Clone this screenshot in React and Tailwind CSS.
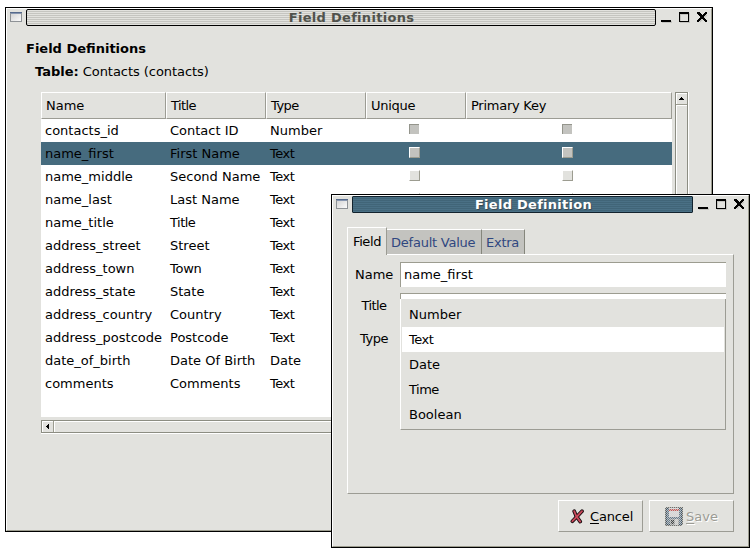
import React from "react";

const COLUMNS = [
  { label: "Name", width: "w-[125px]" },
  { label: "Title", width: "w-[100px] tracking-[-0.6px]" },
  { label: "Type", width: "w-[100px] tracking-[-0.5px]" },
  { label: "Unique", width: "w-[100px] tracking-[-0.25px]" },
  { label: "Primary Key", width: "w-[206px] tracking-[-0.25px]" },
];

const ROWS = [
  ["contacts_id", "Contact ID", "Number"],
  ["name_first", "First Name", "Text"],
  ["name_middle", "Second Name", "Text"],
  ["name_last", "Last Name", "Text"],
  ["name_title", "Title", "Text"],
  ["address_street", "Street", "Text"],
  ["address_town", "Town", "Text"],
  ["address_state", "State", "Text"],
  ["address_country", "Country", "Text"],
  ["address_postcode", "Postcode", "Text"],
  ["date_of_birth", "Date Of Birth", "Date"],
  ["comments", "Comments", "Text"],
];

const TYPES = ["Number", "Text", "Date", "Time", "Boolean"];

// Words that start with a capital T are set tighter than the rest.
const tight = (word) => (/^(Ti|Te|Ty)/.test(word) ? "tracking-[-0.5px]" : word === "Town" ? "tracking-[-0.25px]" : "");

function MenuIcon() {
  return (
    <svg width="13" height="11" viewBox="0 0 13 11" shapeRendering="crispEdges" className="block">
      <defs>
        <linearGradient id="menuFace" x1="0" y1="0" x2="1" y2="1">
          <stop offset="0" stopColor="#d2d2d2" />
          <stop offset="1" stopColor="#fbfbfb" />
        </linearGradient>
      </defs>
      <rect x="0" y="0" width="12" height="10" fill="#8e9296" />
      <rect x="1" y="1" width="10" height="8" fill="url(#menuFace)" />
      <rect x="0" y="0" width="12" height="1" fill="#566a8c" />
      <rect x="1" y="1" width="10" height="1" fill="#8796b0" />
    </svg>
  );
}

function WindowButtons() {
  return (
    <svg width="48" height="12" viewBox="0 0 48 12" shapeRendering="crispEdges" className="block">
      <g fill="#c4c4c0">
        <path d="M1 9h10v2h-10z" />
        <path d="M19 1h10v10h-10zM20 3v7h8v-7z" fillRule="evenodd" />
      </g>
      <path d="M0 8h10v2h-10z" />
      <path d="M18 0h10v10h-10zM19 2v7h8v-7z" fillRule="evenodd" />
      <path d="M38.5 2.5l7 7M45.5 2.5l-7 7" stroke="#c4c4c0" strokeWidth="2.4" shapeRendering="auto" />
      <path d="M36 0h3v1h1v1h1v1h1v-1h1v-1h1v-1h2v2h-1v1h-1v1h-1v2h1v1h1v1h1v2h-2v-1h-1v-1h-1v-1h-2v1h-1v1h-1v1h-2v-2h1v-1h1v-1h1v-2h-1v-1h-1v-1h-1z" />
    </svg>
  );
}

function TitleBar({ title, active }) {
  return (
    <div className="flex h-[17px]">
      <div className="w-[19px] shrink-0 pt-[3px] pl-[3px]">
        <MenuIcon />
      </div>
      <div
        className={
          active
            ? "flex-1 rounded-[1px] border border-[#12232e] bg-[repeating-linear-gradient(#4a7085_0_1px,#416578_1px_2px)] pl-[22px] text-center text-[13px] leading-[16px] font-bold tracking-[0.27px] text-white [text-shadow:1px_1px_0_#3c4c55]"
            : "flex-1 rounded-[2px] border border-black bg-[repeating-linear-gradient(#e2e2de_0_1px,#c5c5c0_1px_2px)] pl-[21px] text-center text-[13px] leading-[15px] font-bold tracking-[0.3px] text-[#50524c]"
        }
      >
        {title}
      </div>
      <div className="w-[55px] shrink-0 pt-[3px] pl-[5px]">
        <WindowButtons />
      </div>
    </div>
  );
}

function Check({ kind, pad }) {
  const look =
    kind === 0
      ? "h-2.5 w-2.5 border-t border-l border-[#94958c] bg-[#c3c3bf]"
      : kind === 1
        ? "h-[11px] w-[11px] border border-t-white border-l-white border-r-[#9c9c90] border-b-[#9c9c90] bg-[#c3c3bf]"
        : "h-[11px] w-[11px] border border-t-white border-l-white border-r-[#9c9c90] border-b-[#9c9c90] bg-[#e2e2de]";
  return (
    <div className={pad}>
      <div className={look} />
    </div>
  );
}

function FieldTable() {
  return (
    <div className="h-[325px] w-[631px] overflow-hidden bg-white">
      <div className="flex h-[27px]">
        {COLUMNS.map((c) => (
          <div
            key={c.label}
            className={`${c.width} border border-t-white border-l-white border-r-[#9c9c94] border-b-[#9c9c94] bg-[#e2e2de] pl-1 leading-[25px]`}
          >
            {c.label}
          </div>
        ))}
      </div>
      {ROWS.map((r, i) => (
        <div key={r[0]} className={i === 1 ? "flex h-[23px] bg-[#466b7e] leading-[23px]" : "flex h-[23px] leading-[23px]"}>
          <div className="w-[125px] pl-1">{r[0]}</div>
          <div className={`w-[100px] pl-1 whitespace-nowrap ${tight(r[1])}`}>{r[1]}</div>
          <div className={`w-[100px] pl-1 ${tight(r[2])}`}>{r[2]}</div>
          <Check kind={i} pad="w-[100px] pt-[5px] pl-[43px]" />
          <Check kind={i} pad="w-[206px] pt-[5px] pl-24" />
        </div>
      ))}
    </div>
  );
}

function DefinitionsWindow() {
  return (
    <section className="absolute top-[7px] left-[5px] h-[525px] w-[708px] border border-black">
      <div className="h-full border border-t-white border-l-white border-r-[#9c9c8e] border-b-[#9c9c8e] bg-[#e2e2de]">
        <TitleBar title="Field Definitions" />
        <h1 className="mt-[15px] ml-[19px] h-4 text-[13px] leading-4 font-bold">Field Definitions</h1>
        <p className="mt-[7px] ml-7 flex h-4 gap-1 leading-4">
          <b>Table:</b>
          <span className="tracking-[-0.05px]">Contacts (contacts)</span>
        </p>
        <div className="mt-3 ml-[34px] flex gap-[3px]">
          <FieldTable />
          <div className="h-[326px] w-[14px] border-r border-white">
            <div className="h-full border border-[#8c8d82]">
              <div className="flex h-3 items-center justify-center border-b border-[#9c9c90] shadow-[inset_1px_1px_0_#fff]">
                <svg width="5" height="3" viewBox="0 0 5 3" shapeRendering="crispEdges">
                  <path d="M2 0h1v1h1v1h1v1h-5v-1h1v-1h1z" />
                </svg>
              </div>
              <div className="h-[312px] border-t border-l border-white" />
            </div>
          </div>
        </div>
        <div className="mt-0.5 ml-[34px] h-[14px] w-[631px] border-b border-white">
          <div className="flex h-full border border-[#8c8d82]">
            <div className="flex w-3 items-center justify-center border-r border-[#9c9c90] shadow-[inset_1px_1px_0_#fff]">
              <svg width="3" height="5" viewBox="0 0 3 5" shapeRendering="crispEdges">
                <path d="M0 2h1v-1h1v-1h1v5h-1v-1h-1v-1h-1z" />
              </svg>
            </div>
            <div className="flex-1 border-t border-l border-white" />
          </div>
        </div>
      </div>
    </section>
  );
}

function CancelIcon() {
  return (
    <svg width="14" height="15" viewBox="0 0 14 15" className="block" fill="none" strokeLinecap="round" strokeLinejoin="round">
      <g stroke="#160c0e" strokeWidth="3.7">
        <path d="M4.2 2.2L6.2 7L10.2 12.6" />
        <path d="M12 2.2L7.5 7L2.4 12.2" />
      </g>
      <g stroke="#c8485a" strokeWidth="1.9">
        <path d="M4.2 2.2L6.2 7L10.2 12.6" />
        <path d="M12 2.2L7.5 7L2.4 12.2" />
      </g>
    </svg>
  );
}

function SaveIcon() {
  return (
    <svg width="18" height="19" viewBox="0 0 18 19" shapeRendering="crispEdges" className="block">
      <defs>
        <pattern id="dither" width="2" height="2" patternUnits="userSpaceOnUse">
          <rect width="1" height="1" fill="#e2e2de" />
          <rect x="1" y="1" width="1" height="1" fill="#e2e2de" />
        </pattern>
      </defs>
      <rect width="18" height="19" rx="2" fill="#6e706e" />
      <rect x="1" y="1" width="16" height="17" rx="1" fill="#3f5264" />
      <rect x="2" y="2" width="14" height="15" fill="#66798a" />
      <rect x="4" y="1" width="10" height="9" fill="#d4d4d6" />
      <rect x="4" y="2" width="10" height="2" fill="#c25b5b" />
      <rect x="5" y="12" width="9" height="6" fill="#9a9c9c" />
      <rect x="6" y="13" width="3" height="4" fill="#414546" />
      <rect x="10" y="12" width="3" height="6" fill="#c8c8c6" />
      <rect width="18" height="19" fill="url(#dither)" opacity="0.7" />
    </svg>
  );
}

function DialogWindow() {
  const bevel = "border border-t-white border-l-white border-r-[#9c9c94] border-b-[#9c9c94]";
  return (
    <section className="absolute top-[194px] left-[331px] h-[354px] w-[419px] border border-black">
      <div className="h-full border border-t-white border-l-white border-r-[#9c9c8e] border-b-[#9c9c8e] bg-[#e2e2de]">
        <TitleBar title="Field Definition" active />
        <div className="mt-[14px] ml-[14px] flex h-[27px] items-end">
          <div className="relative z-10 -mb-px h-7 w-10 border-t border-r border-l border-t-white border-r-[#9c9c94] border-l-white bg-[#e2e2de] pl-[5px] leading-[27px] tracking-[-0.4px]">
            Field
          </div>
          <div className="h-[25px] w-[95px] border-t border-r border-t-white border-r-[#85867c] bg-[#c3c3bf] pl-1 leading-[26px] tracking-[-0.23px] whitespace-nowrap text-[#30477f]">
            Default Value
          </div>
          <div className="h-[25px] w-[43px] border-t border-r border-t-white border-r-[#85867c] bg-[#c3c3bf] pl-1 leading-[26px] tracking-[-0.25px] text-[#30477f]">
            Extra
          </div>
        </div>
        <div className={`${bevel} relative ml-[14px] h-60 w-[387px] pt-[7px] pl-[7px]`}>
          <div className="flex h-[31px]">
            <div className="w-[38px] text-center leading-[25px]">Name</div>
            <div className="ml-[7px] h-[25px] w-[326px] border-t border-l border-[#9c9c90] bg-white pl-[3px] leading-[24px]">
              name_first
            </div>
          </div>
          <div className="flex h-[31px]">
            <div className="w-[38px] text-center leading-[25px] tracking-[-0.6px]">Title</div>
            <div className="ml-[7px] h-[25px] w-[326px] border-t border-l border-[#9c9c90] bg-white" />
          </div>
          <div className="mt-0.5 w-[38px] text-center leading-[25px] tracking-[-0.5px]">Type</div>
          <div className="absolute top-[44px] left-[52px] h-[131px] w-[326px] border-r border-b border-l border-r-[#9c9c94] border-b-[#9c9c94] border-l-white bg-[#e2e2de] pt-[3px]">
            {TYPES.map((t) => (
              <div
                key={t}
                className={`mx-px h-[25px] pl-[7px] leading-[25px] ${tight(t)} ${t === "Text" ? "bg-white" : ""}`}
              >
                {t}
              </div>
            ))}
          </div>
        </div>
        <div className="mt-1.5 ml-[225px] flex gap-1.5">
          <button className={`${bevel} flex h-8 w-[85px] items-center pl-[11px]`}>
            <CancelIcon />
            <span className="mt-0.5 ml-1.5 tracking-[-0.15px]">
              <span className="underline underline-offset-2">C</span>ancel
            </span>
          </button>
          <button className={`${bevel} flex h-8 w-[85px] items-center pl-[15px] text-[#9b9b94] [text-shadow:1px_1px_0_#fff]`}>
            <SaveIcon />
            <span className="mt-0.5 ml-[3px]">
              <span className="underline underline-offset-2">S</span>ave
            </span>
          </button>
        </div>
      </div>
    </section>
  );
}

export default function App() {
  return (
    <main className="relative h-[552px] w-[756px] overflow-hidden bg-white font-['DejaVu_Sans',sans-serif] text-[13px] text-black">
      <DefinitionsWindow />
      <DialogWindow />
    </main>
  );
}
